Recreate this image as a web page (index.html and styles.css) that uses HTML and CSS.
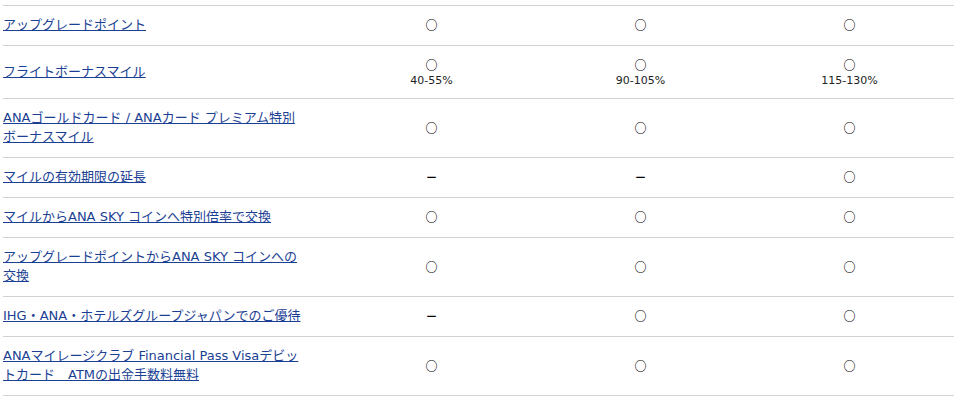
FILE: index.html
```html
<!DOCTYPE html>
<html lang="ja">
<head>
<meta charset="utf-8">
<link rel="stylesheet" href="styles.css">
</head>
<body>
<table class="benefits">
  <colgroup>
    <col class="c-label"><col class="c-val"><col class="c-val"><col class="c-val">
  </colgroup>
  <tbody>
    <tr><th><a href="#">アップグレードポイント</a></th><td>○</td><td>○</td><td>○</td></tr>
    <tr><th><a href="#">フライトボーナスマイル</a></th><td>○<span class="pct">40-55%</span></td><td>○<span class="pct">90-105%</span></td><td>○<span class="pct">115-130%</span></td></tr>
    <tr><th><a href="#">ANAゴールドカード / ANAカード プレミアム特別ボーナスマイル</a></th><td>○</td><td>○</td><td>○</td></tr>
    <tr><th><a href="#">マイルの有効期限の延長</a></th><td>－</td><td>－</td><td>○</td></tr>
    <tr><th><a href="#">マイルからANA SKY コインへ特別倍率で交換</a></th><td>○</td><td>○</td><td>○</td></tr>
    <tr><th><a href="#">アップグレードポイントからANA SKY コインへの交換</a></th><td>○</td><td>○</td><td>○</td></tr>
    <tr><th><a href="#">IHG・ANA・ホテルズグループジャパンでのご優待</a></th><td>－</td><td>○</td><td>○</td></tr>
    <tr><th><a href="#">ANAマイレージクラブ Financial Pass Visaデビットカード　ATMの出金手数料無料</a></th><td>○</td><td>○</td><td>○</td></tr>
  </tbody>
</table>
</body>
</html>
```
FILE: styles.css
```css
html, body {
  margin: 0;
  padding: 0;
  background: #fff;
}
body {
  padding: 5px 3px 0 3px;
  font-family: "DejaVu Sans", "Noto Sans CJK JP", sans-serif;
  font-size: 13px;
  color: #222;
}
.benefits {
  width: 951px;
  border-collapse: collapse;
  table-layout: fixed;
  border-top: 1px solid #d2d2d2;
}
.c-label { width: 324px; }
.c-val { width: 209px; }
.benefits tr {
  border-bottom: 1px solid #d2d2d2;
}
.benefits th, .benefits td {
  padding: 9px 0 11px;
  line-height: 19px;
  vertical-align: middle;
  font-weight: normal;
}
.benefits th {
  text-align: left;
  padding-right: 22px;
}
.benefits td {
  text-align: center;
  font-family: "Noto Sans CJK JP", sans-serif;
  font-size: 12px;
  font-weight: 700;
  color: #000;
}
.benefits a {
  color: #1b3f94;
  text-decoration: underline;
}
.pct {
  display: block;
  font-family: "DejaVu Sans", sans-serif;
  font-size: 11px;
  font-weight: normal;
  line-height: 13px;
  color: #222;
}
```
